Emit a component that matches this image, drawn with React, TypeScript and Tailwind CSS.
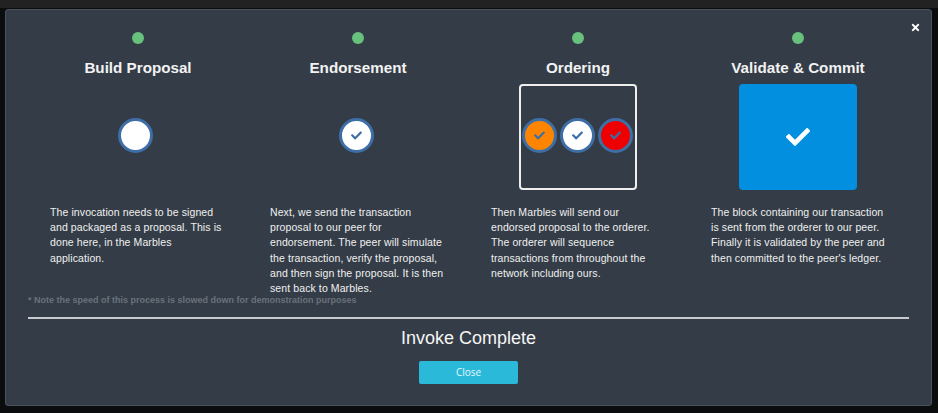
import React from "react";
import { FaCheck, FaTimes } from "react-icons/fa";

type Fill = "white" | "orange" | "red";

const fills: Record<Fill, string> = {
  white: "bg-white",
  orange: "bg-[#ff8500]",
  red: "bg-[#ee0000]",
};

// Round status marker with a blue ring
const Marker: React.FC<{ fill?: Fill; check?: boolean }> = ({ fill = "white", check = true }) => (
  <div className={`flex h-[35px] w-[35px] items-center justify-center rounded-full border-[3px] border-[#3e6ea6] ${fills[fill]}`}>
    {check && <FaCheck className="text-[11px] text-[#3e6ea6]" />}
  </div>
);

const Step: React.FC<{ title: string; text: string[]; indent?: boolean; children: React.ReactNode }> = ({
  title,
  text,
  indent = false,
  children,
}) => (
  <div className="flex w-[220px] flex-col">
    <div className="mx-auto mt-[22px] h-3 w-3 shrink-0 rounded-full bg-[#68c17c]" />
    <h3 className="mt-[12px] shrink-0 text-center text-[15.2px] leading-[24px] font-bold text-[#f2f2f2]">{title}</h3>
    <div className="mx-auto mt-[4px] flex h-[106px] w-[118px] shrink-0 items-center justify-center">{children}</div>
    <p
      className={`mt-[15px] shrink-0 text-[10.5px] leading-[15.2px] tracking-[0.1px] whitespace-nowrap text-[#f0f0f0] ${
        indent ? "ml-[23px]" : "ml-[22px]"
      }`}
    >
      {text.map((line) => (
        <span key={line} className="block">
          {line}
        </span>
      ))}
    </p>
  </div>
);

export default function App() {
  return (
    <div className="h-[413px] w-[938px] overflow-hidden bg-[#0b0c0d] font-['Liberation_Sans',sans-serif]">
      <div className="h-[8px] bg-[#222222]" />
      <div className="pt-[1px] pl-[5px]">
        <div className="relative h-[397px] w-[927px] rounded-[3px] border border-[#4a525b] bg-[#343d47] px-[22px]">
          <FaTimes className="absolute top-[12px] right-[10px] text-[11px] text-white" />

          <div className="flex h-[285px]">
            <Step
              title="Build Proposal"
              text={[
                "The invocation needs to be signed",
                "and packaged as a proposal. This is",
                "done here, in the Marbles",
                "application.",
              ]}
            >
              <div className="mr-[6px] mb-[3px]">
                <Marker check={false} />
              </div>
            </Step>
            <Step
              title="Endorsement"
              text={[
                "Next, we send the transaction",
                "proposal to our peer for",
                "endorsement. The peer will simulate",
                "the transaction, verify the proposal,",
                "and then sign the proposal. It is then",
                "sent back to Marbles.",
              ]}
            >
              <div className="mr-[4px] mb-[3px]">
                <Marker />
              </div>
            </Step>
            <Step
              title="Ordering"
              indent
              text={[
                "Then Marbles will send our",
                "endorsed proposal to the orderer.",
                "The orderer will sequence",
                "transactions from throughout the",
                "network including ours.",
              ]}
            >
              <div className="flex h-full w-full items-center justify-center gap-[3px] rounded-[4px] border-2 border-[#eeeeee] pr-[1px] pb-[3px]">
                <Marker fill="orange" />
                <Marker />
                <Marker fill="red" />
              </div>
            </Step>
            <Step
              title="Validate & Commit"
              indent
              text={[
                "The block containing our transaction",
                "is sent from the orderer to our peer.",
                "Finally it is validated by the peer and",
                "then committed to the peer's ledger.",
              ]}
            >
              <div className="flex h-full w-full items-center justify-center rounded-[4px] bg-[#028fe0] pb-[1px]">
                <FaCheck className="text-[24px] text-white" />
              </div>
            </Step>
          </div>

          <p className="text-[9px] leading-[10px] font-bold text-[#69727c]">
            * Note the speed of this process is slowed down for demonstration purposes
          </p>
          <hr className="mt-[12px] w-[881px] border-t-2 border-[#c8cacc]" />
          <h2 className="mt-[6px] text-center text-[18px] leading-[26px] text-[#f5f5f5]">Invoke Complete</h2>
          <div className="mt-[10px] flex justify-center">
            <button className="h-[23px] w-[99px] rounded-[2px] bg-[#2bb9d9] font-['Open_Sans',sans-serif] text-[10px] text-[#e6f7fb]">
              Close
            </button>
          </div>
        </div>
      </div>
    </div>
  );
}
